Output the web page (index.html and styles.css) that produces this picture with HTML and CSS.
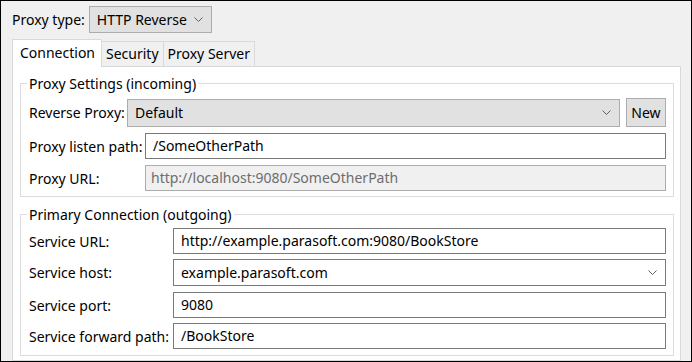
FILE: index.html
```html
<!DOCTYPE html>
<html>
<head>
	<title>Proxy Settings</title>
	<link rel="stylesheet" href="styles.css">
	<meta charset="utf-8">
</head>
<body>
	<div class="window">

		<div class="type__row">
			<span class="label">Proxy type:</span>
			<div class="combo combo__type">
				<span class="combo__text">HTTP Reverse</span>
				<svg class="chevron" width="9" height="5" viewBox="0 0 9 5"><polyline points="0.5,0.5 4.5,4.5 8.5,0.5"/></svg>
			</div>
		</div>

		<div class="tabs">
			<div class="tab tab__active">Connection</div>
			<div class="tab">Security</div>
			<div class="tab">Proxy Server</div>
		</div>

		<div class="panel">

			<fieldset class="group group__incoming">
				<legend>Proxy Settings (incoming)</legend>

				<div class="row">
					<span class="label label__rev">Reverse Proxy:</span>
					<div class="combo combo__grey">
						<span class="combo__text">Default</span>
						<svg class="chevron" width="9" height="5" viewBox="0 0 9 5"><polyline points="0.5,0.5 4.5,4.5 8.5,0.5"/></svg>
					</div>
					<button class="button">New</button>
				</div>

				<div class="row">
					<span class="label label__in">Proxy listen path:</span>
					<div class="field">/SomeOtherPath</div>
				</div>

				<div class="row">
					<span class="label label__in">Proxy URL:</span>
					<div class="field field__disabled">http://localhost:9080/SomeOtherPath</div>
				</div>
			</fieldset>

			<fieldset class="group group__outgoing">
				<legend>Primary Connection (outgoing)</legend>

				<div class="row">
					<span class="label label__out">Service URL:</span>
					<div class="field">http://example.parasoft.com:9080/BookStore</div>
				</div>

				<div class="row row__combo">
					<span class="label label__out">Service host:</span>
					<div class="combo combo__white">
						<span class="combo__text">example.parasoft.com</span>
						<svg class="chevron" width="9" height="5" viewBox="0 0 9 5"><polyline points="0.5,0.5 4.5,4.5 8.5,0.5"/></svg>
					</div>
				</div>

				<div class="row">
					<span class="label label__out">Service port:</span>
					<div class="field">9080</div>
				</div>

				<div class="row">
					<span class="label label__out">Service forward path:</span>
					<div class="field">/BookStore</div>
				</div>
			</fieldset>

		</div>
	</div>
</body>
</html>
```

FILE: styles.css
```css
* {
	box-sizing: border-box;
	margin: 0;
	padding: 0;
}

body {
	width: 692px;
	height: 362px;
	overflow: hidden;
	font-family: "Noto Sans", "Open Sans", sans-serif;
	font-size: 14px;
	color: #000;
}

.window {
	width: 692px;
	height: 362px;
	background: #f0f0f0;
	border: 1px solid #000;
	padding: 5px 10px 0 11px;
	display: flex;
	flex-direction: column;
	overflow: hidden;
}

.type__row {
	display: flex;
	align-items: center;
	gap: 4px;
}

.label {
	white-space: nowrap;
	flex: none;
}

.label__rev { width: 98px; }
.label__in { width: 116px; }
.label__out { width: 144px; }

.combo {
	display: flex;
	align-items: center;
	justify-content: space-between;
	border: 1px solid #adadad;
	background: #e1e1e1;
	padding: 0 8px 0 7px;
}

.combo__type {
	width: 123px;
	height: 27px;
}

.combo__grey {
	flex: 1;
	height: 28px;
}

.combo__white {
	flex: 1;
	height: 27px;
	background: #fff;
	border-color: #7a7a7a;
}

.chevron {
	flex: none;
	fill: none;
	stroke: #606060;
	stroke-width: 1;
}

.tabs {
	display: flex;
	align-items: flex-end;
	margin-top: 6px;
	height: 27px;
}

.tab {
	height: 25px;
	line-height: 23px;
	padding: 0 4px;
	border: 1px solid #d9d9d9;
	border-bottom: none;
	background: #f0f0f0;
	margin-left: -1px;
}

.tab__active {
	height: 28px;
	line-height: 26px;
	margin: 0 0 -1px 0;
	padding: 0 7px;
	width: 90px;
	background: #fff;
	position: relative;
	z-index: 1;
}

.panel {
	flex: 1;
	width: 669px;
	background: #fff;
	border: 1px solid #d9d9d9;
	padding: 7px 6px 0 7px;
}

.group {
	border: 1px solid #dcdcdc;
	padding: 0 7px 0 8px;
	min-width: 0;
}

.group legend {
	line-height: 19px;
	padding: 0 2px;
	margin-left: -2px;
}

.group__incoming {
	padding-top: 5px;
	padding-bottom: 5px;
}

.group__outgoing {
	margin-top: 8px;
	padding-top: 4px;
	padding-bottom: 6px;
}

.row {
	display: flex;
	align-items: center;
	margin-bottom: 6px;
}

.group__outgoing .row {
	margin-bottom: 5px;
}

.group__outgoing .row__combo {
	margin-bottom: 6px;
}

.row:last-child,
.group__outgoing .row:last-child {
	margin-bottom: 0;
}

.field {
	flex: 1;
	height: 26px;
	line-height: 24px;
	border: 1px solid #7a7a7a;
	background: #fff;
	padding: 0 7px;
	white-space: nowrap;
	overflow: hidden;
}

.field__disabled {
	background: #f0f0f0;
	border-color: #adadad;
	color: #6d6d6d;
	padding-left: 5px;
}

.button {
	flex: none;
	width: 40px;
	height: 29px;
	margin-left: 6px;
	border: 1px solid #adadad;
	background: #e1e1e1;
	font: inherit;
	color: #000;
}
```
